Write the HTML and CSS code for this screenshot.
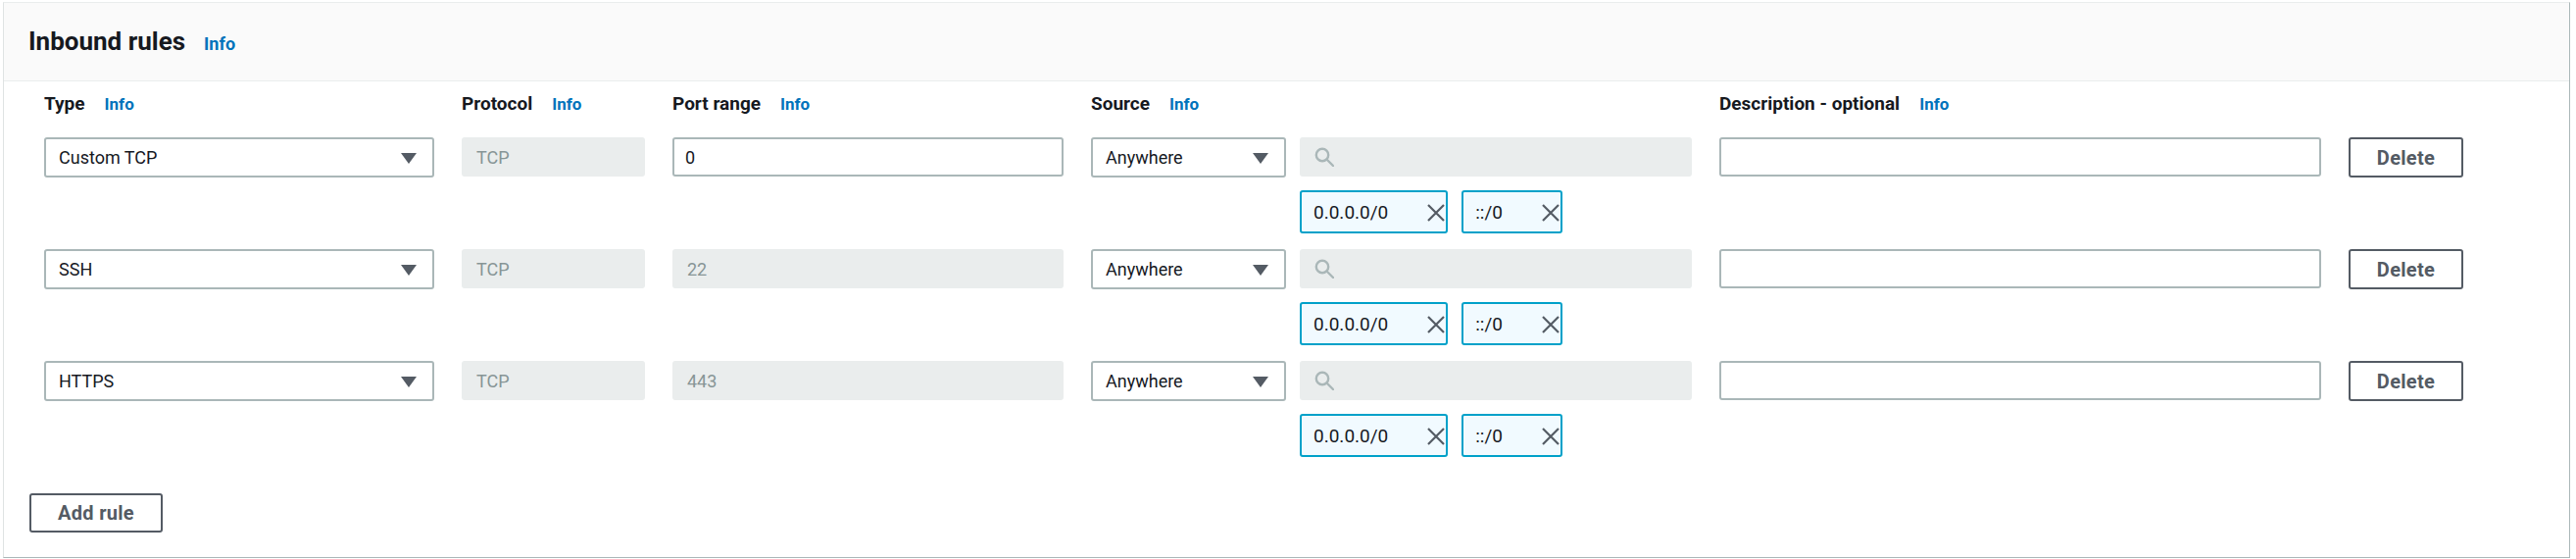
FILE: index.html
```html
<!DOCTYPE html>
<html lang="en">
<head>
<meta charset="utf-8">
<title>Inbound rules</title>
<link rel="stylesheet" href="styles.css">
</head>
<body>
<section class="panel">
  <header class="panel-header">
    <h2 class="title">Inbound rules</h2>
    <a class="info info-lg" href="#">Info</a>
  </header>
  <div class="panel-body">
    <div class="rules">
      <div class="label"><span>Type</span><a class="info" href="#">Info</a></div>
      <div class="label"><span>Protocol</span><a class="info" href="#">Info</a></div>
      <div class="label"><span>Port range</span><a class="info" href="#">Info</a></div>
      <div class="label"><span>Source</span><a class="info" href="#">Info</a></div>
      <div class="label"><span>Description - optional</span><a class="info" href="#">Info</a></div>
      <div></div>

      <!-- Row 1 -->
      <div class="select"><span>Custom TCP</span><svg class="caret" viewBox="0 0 16 11"><path d="M0 0H16L8 11Z"/></svg></div>
      <div class="field disabled">TCP</div>
      <input class="field" type="text" value="0">
      <div class="source">
        <div class="source-top">
          <div class="select select-sm"><span>Anywhere</span><svg class="caret" viewBox="0 0 16 11"><path d="M0 0H16L8 11Z"/></svg></div>
          <div class="search"><svg class="search-icon" viewBox="0 0 20 20"><circle cx="8" cy="8" r="6.2"/><path d="M12.5 12.5L19 19"/></svg></div>
        </div>
        <div class="tokens">
          <div class="token"><span>0.0.0.0/0</span><svg class="x" viewBox="0 0 18 18"><path d="M1 1L17 17M17 1L1 17"/></svg></div>
          <div class="token"><span>::/0</span><svg class="x" viewBox="0 0 18 18"><path d="M1 1L17 17M17 1L1 17"/></svg></div>
        </div>
      </div>
      <input class="field" type="text" value="">
      <button class="btn btn-delete" type="button">Delete</button>

      <!-- Row 2 -->
      <div class="select"><span>SSH</span><svg class="caret" viewBox="0 0 16 11"><path d="M0 0H16L8 11Z"/></svg></div>
      <div class="field disabled">TCP</div>
      <div class="field disabled">22</div>
      <div class="source">
        <div class="source-top">
          <div class="select select-sm"><span>Anywhere</span><svg class="caret" viewBox="0 0 16 11"><path d="M0 0H16L8 11Z"/></svg></div>
          <div class="search"><svg class="search-icon" viewBox="0 0 20 20"><circle cx="8" cy="8" r="6.2"/><path d="M12.5 12.5L19 19"/></svg></div>
        </div>
        <div class="tokens">
          <div class="token"><span>0.0.0.0/0</span><svg class="x" viewBox="0 0 18 18"><path d="M1 1L17 17M17 1L1 17"/></svg></div>
          <div class="token"><span>::/0</span><svg class="x" viewBox="0 0 18 18"><path d="M1 1L17 17M17 1L1 17"/></svg></div>
        </div>
      </div>
      <input class="field" type="text" value="">
      <button class="btn btn-delete" type="button">Delete</button>

      <!-- Row 3 -->
      <div class="select"><span>HTTPS</span><svg class="caret" viewBox="0 0 16 11"><path d="M0 0H16L8 11Z"/></svg></div>
      <div class="field disabled">TCP</div>
      <div class="field disabled">443</div>
      <div class="source">
        <div class="source-top">
          <div class="select select-sm"><span>Anywhere</span><svg class="caret" viewBox="0 0 16 11"><path d="M0 0H16L8 11Z"/></svg></div>
          <div class="search"><svg class="search-icon" viewBox="0 0 20 20"><circle cx="8" cy="8" r="6.2"/><path d="M12.5 12.5L19 19"/></svg></div>
        </div>
        <div class="tokens">
          <div class="token"><span>0.0.0.0/0</span><svg class="x" viewBox="0 0 18 18"><path d="M1 1L17 17M17 1L1 17"/></svg></div>
          <div class="token"><span>::/0</span><svg class="x" viewBox="0 0 18 18"><path d="M1 1L17 17M17 1L1 17"/></svg></div>
        </div>
      </div>
      <input class="field" type="text" value="">
      <button class="btn btn-delete" type="button">Delete</button>
    </div>
    <button class="btn btn-add" type="button">Add rule</button>
  </div>
</section>
</body>
</html>
```
FILE: styles.css
```css
* { box-sizing: border-box; }

html, body {
  margin: 0;
  padding: 0;
  background: #ffffff;
}

body {
  font-family: Roboto, "Liberation Sans", Arial, sans-serif;
  color: #16191f;
}

.panel {
  margin: 2px 6px 0 3px;
  border-top: 1px solid #eaeded;
  border-left: 1px solid #dfe3e3;
  border-right: 1px solid #aab7b8;
  border-bottom: 1px solid #aab7b8;
  background: #ffffff;
}

.panel-header {
  height: 80px;
  background: #fafafa;
  border-bottom: 1px solid #eaeded;
  display: flex;
  align-items: baseline;
  padding: 0 0 0 25px;
  line-height: 79px;
}

.title {
  margin: 0;
  font-size: 26px;
  font-weight: 700;
  color: #16191f;
}

.info {
  color: #0073bb;
  font-weight: 700;
  font-size: 17px;
  text-decoration: none;
  margin-left: 20px;
}

.info-lg {
  font-size: 18px;
  margin-left: 19px;
}

.panel-body {
  padding: 12px 0 25px 26px;
}

.rules {
  margin-left: 15px;
  display: grid;
  grid-template-columns: 398px 187px 399px 613px 614px 117px;
  column-gap: 28px;
  row-gap: 16px;
  align-items: start;
}

.label {
  display: flex;
  align-items: baseline;
  font-size: 19px;
  font-weight: 700;
  line-height: 22px;
  height: 22px;
  margin-bottom: 7px;
  white-space: nowrap;
}

.select {
  height: 41px;
  border: 2px solid #aab7b8;
  border-radius: 3px;
  background: #fff;
  display: flex;
  align-items: center;
  justify-content: space-between;
  padding: 0 16px 0 13px;
  font-size: 18px;
  color: #16191f;
}

.select-sm {
  width: 199px;
  flex: none;
}

.caret {
  width: 16px;
  height: 11px;
  fill: #545b64;
  flex: none;
  margin-top: 2px;
}

.field {
  display: flex;
  align-items: center;
  width: 100%;
  height: 40px;
  margin: 0;
  border: 2px solid #aab7b8;
  border-radius: 3px;
  background: #fff;
  padding: 0 11px;
  font-family: Roboto, "Liberation Sans", Arial, sans-serif;
  font-size: 18px;
  color: #16191f;
  outline: none;
}

.field.disabled {
  border-color: #eaeded;
  background: #eaeded;
  color: #879596;
  padding-left: 13px;
}

.source-top {
  display: flex;
  gap: 14px;
}

.search {
  flex: 1;
  height: 40px;
  background: #eaeded;
  border-radius: 3px;
  display: flex;
  align-items: center;
  padding-left: 15px;
}

.search-icon {
  width: 20px;
  height: 20px;
  fill: none;
  stroke: #aab7b8;
  stroke-width: 2.4;
  stroke-linecap: round;
}

.tokens {
  display: flex;
  gap: 14px;
  margin-top: 13px;
  margin-left: 213px;
}

.token {
  height: 44px;
  border: 2px solid #00a1c9;
  border-radius: 3px;
  background: #f1faff;
  display: flex;
  align-items: center;
  padding: 0 1px 0 12px;
  font-size: 19px;
  color: #16191f;
}

.x {
  width: 18px;
  height: 18px;
  margin-left: 40px;
  fill: none;
  stroke: #545b64;
  stroke-width: 2.2;
  margin-top: 2px;
}

.btn {
  font-family: Roboto, "Liberation Sans", Arial, sans-serif;
  font-weight: 700;
  font-size: 20px;
  letter-spacing: 0.3px;
  color: #545b64;
  background: #fff;
  border: 2px solid #545b64;
  border-radius: 3px;
  padding: 0;
  margin: 0;
  cursor: pointer;
}

.btn-delete {
  width: 117px;
  height: 41px;
}

.btn-add {
  display: block;
  width: 136px;
  height: 40px;
  margin-top: 37px;
}
```
